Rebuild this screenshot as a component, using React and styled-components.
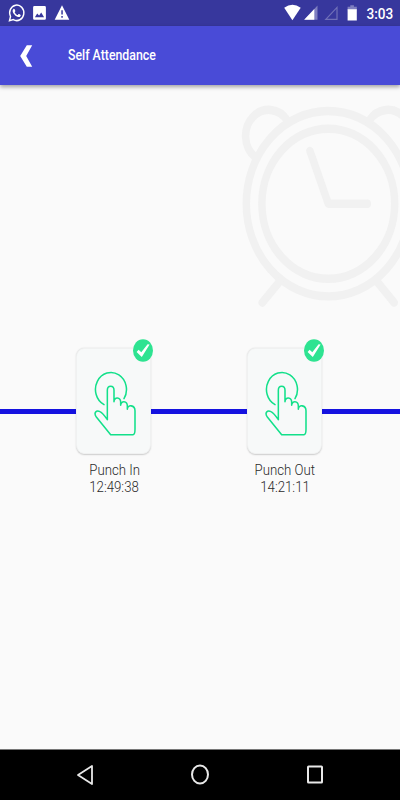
import styled, { createGlobalStyle } from "styled-components";

const GlobalStyle = createGlobalStyle`
  * {
    box-sizing: border-box;
  }
  body {
    margin: 0;
    font-family: Roboto, "Liberation Sans", sans-serif;
  }
`;

const Screen = styled.div`
  display: flex;
  flex-direction: column;
  width: 400px;
  height: 800px;
  overflow: hidden;
  background-color: #fafafa;
`;

const StatusBar = styled.div`
  display: flex;
  justify-content: space-between;
  height: 26px;
  flex-shrink: 0;
  background-color: #37379d;
  svg {
    display: block;
  }
`;

const StatusRight = styled.div`
  display: flex;
`;

const Clock = styled.span`
  width: 34px;
  padding-left: 0.5px;
  font-size: 14px;
  font-weight: 500;
  line-height: 28px;
  color: white;
  transform: scaleX(0.97);
  transform-origin: left;
`;

const Header = styled.header`
  display: flex;
  align-items: center;
  height: 59px;
  flex-shrink: 0;
  padding-left: 19px;
  background-color: #494bd7;
  box-shadow: 0 2px 4px rgba(0, 0, 0, 0.35);
  z-index: 1;
`;

const Title = styled.h1`
  margin: 0 0 1px 34px;
  font-size: 14px;
  font-weight: 500;
  line-height: 20px;
  color: white;
  white-space: nowrap;
  transform: scaleX(0.88);
  transform-origin: left;
`;

const Content = styled.main`
  display: flex;
  flex-direction: column;
  flex: 1;
`;

const AlarmBox = styled.div`
  align-self: flex-end;
  width: 170px;
  height: 230px;
  margin-top: 5px;
  svg {
    display: block;
  }
`;

const PunchRow = styled.div`
  display: flex;
  gap: 51px;
  height: 180px;
  margin-top: 28px;
  padding-left: 53.8px;
  background: linear-gradient(#1512e0, #1512e0) 0 60.5px / 100% 5px no-repeat;
`;

const PunchItem = styled.div`
  display: flex;
  flex-direction: column;
  align-items: center;
  width: 120px;
`;

const Card = styled.div`
  position: relative;
  width: 75px;
  height: 106px;
  padding: 22px 0 0 17px;
  border-radius: 8px / 9px;
  border: 1px solid #f0f1f1;
  background-color: #f7f9f9;
  box-shadow: 0 0.5px 1.5px rgba(0, 0, 0, 0.18);
  svg {
    display: block;
  }
`;

const Badge = styled.div`
  position: absolute;
  top: -10px;
  right: -3px;
`;

const Label = styled.p`
  margin: 0;
  padding-left: 0.8px;
  font-size: 14px;
  font-weight: 350;
  line-height: 17px;
  color: #2a2a2a;
  white-space: nowrap;
  transform: scaleX(0.945);
  &:first-of-type {
    margin-top: 8px;
  }
`;

const NavBar = styled.nav`
  display: flex;
  justify-content: space-between;
  align-items: center;
  height: 51px;
  flex-shrink: 0;
  padding: 0 76px;
  border-top: 1px solid #777;
  background-color: black;
`;

function NoticeIcons() {
  return (
    <svg width="80" height="26" viewBox="0 0 80 26" fill="white">
      <g transform="translate(8.6 4.2) scale(0.67 0.73)">
        <path d="M17.472 14.382c-.297-.149-1.758-.867-2.03-.967-.273-.099-.471-.148-.67.15-.197.297-.767.966-.94 1.164-.173.199-.347.223-.644.075-.297-.15-1.255-.463-2.39-1.475-.883-.788-1.48-1.761-1.653-2.059-.173-.297-.018-.458.13-.606.134-.133.298-.347.446-.52.149-.174.198-.298.298-.497.099-.198.05-.371-.025-.52-.075-.149-.669-1.612-.916-2.207-.242-.579-.487-.5-.669-.51-.173-.008-.371-.01-.57-.01-.198 0-.52.074-.792.372-.272.297-1.04 1.016-1.04 2.479 0 1.462 1.065 2.875 1.213 3.074.149.198 2.096 3.2 5.077 4.487.709.306 1.262.489 1.694.625.712.227 1.36.195 1.871.118.571-.085 1.758-.719 2.006-1.413.248-.694.248-1.289.173-1.413-.074-.124-.272-.198-.57-.347" />
        <path
          d="M1.3 22.7l1.6-5.8A10.6 10.6 0 1 1 7.1 21.1z"
          fill="none"
          stroke="white"
          strokeWidth="2.1"
        />
      </g>
      <path
        fillRule="evenodd"
        d="M34.4 6h10.2a1.3 1.4 0 0 1 1.3 1.4v11a1.3 1.4 0 0 1-1.3 1.4H34.4a1.3 1.4 0 0 1-1.3-1.4v-11A1.3 1.4 0 0 1 34.4 6zM37.2 13.6l-2.3 3.6h9.2l-2.9-4.6-2.1 3z"
      />
      <path
        fillRule="evenodd"
        d="M62 5.2l7.3 14.5H54.7zM61.3 10.3v4.3h1.5v-4.3zM61.3 16v1.7h1.5V16z"
      />
    </svg>
  );
}

function SignalIcons() {
  return (
    <svg width="82" height="26" viewBox="0 0 82 26" fill="white">
      <path d="M.2 7.7Q8.4 2 16.7 7.7L8.4 20.2z" />
      <path d="M33.5 5.5v14.2H20.2z" fill="#7f7fc0" />
      <path d="M30.3 9v10.7H20.2z" />
      <path d="M53 7.4v11.9H41.8z" fill="none" stroke="#7070b8" strokeWidth="1.2" />
      <path d="M66.3 5.2h3.6v1.6h2.9v3.4h-9.2v-3.4h2.7z" fill="#7f7fc0" />
      <path d="M63.6 9.2h9.2v11.2h-9.2z" />
    </svg>
  );
}

function AlarmClock() {
  return (
    <svg
      width="170"
      height="230"
      viewBox="0 0 170 203.5"
      preserveAspectRatio="none"
      fill="none"
      stroke="#f1f1f1"
      strokeWidth="7.5"
      strokeLinecap="round"
      strokeLinejoin="round"
    >
      <circle cx="98.3" cy="100.6" r="82" />
      <circle cx="98.3" cy="100.6" r="66.4" />
      <path d="M80 54l18.3 46.6h39" />
      <path d="M57.5 27.2A23.1 23.1 0 1 0 24.7 59" />
      <path d="M139.1 27.2A23.1 23.1 0 1 1 171.9 59" />
      <path d="M49.5 169.5L32.3 188.2M147.1 169.5l17 18.7" />
    </svg>
  );
}

function HandIcon() {
  return (
    <svg
      width="42"
      height="65"
      viewBox="88 122 126 195"
      fill="none"
      stroke="#12e08a"
      strokeWidth="4.6"
      strokeLinecap="round"
      strokeLinejoin="round"
    >
      <path d="M118 223A46.5 51 0 1 1 178 205" />
      <path d="M128 268V180C128 164 148 164 148 180V214C148 199 168 199 168 216V225C168 210 188 211 188 227V237C188 221 211 224 211 241V297Q211 313 205 313H138L95 260C86 248 95 238 106 244Q114 248 128 268" />
    </svg>
  );
}

function CheckIcon() {
  return (
    <svg width="20" height="23" viewBox="0 0 20 23">
      <ellipse cx="10" cy="11.5" rx="10" ry="11.3" fill="#2ee391" />
      <path d="M3.6 13l2-2.3 2.7 2.5L14.6 5.3l2 .2L8.8 18z" fill="white" />
    </svg>
  );
}

function Punch({ name, time }) {
  return (
    <PunchItem>
      <Card>
        <HandIcon />
        <Badge>
          <CheckIcon />
        </Badge>
      </Card>
      <Label>{name}</Label>
      <Label>{time}</Label>
    </PunchItem>
  );
}

function App() {
  return (
    <>
      <GlobalStyle />
      <Screen>
        <StatusBar>
          <NoticeIcons />
          <StatusRight>
            <SignalIcons />
            <Clock>3:03</Clock>
          </StatusRight>
        </StatusBar>
        <Header>
          <svg width="15" height="24" viewBox="0 0 15 24">
            <path d="M7.8 1.3h5.4L7.2 12l6 10.7H7.8L1.2 12z" fill="white" />
          </svg>
          <Title>Self Attendance</Title>
        </Header>
        <Content>
          <AlarmBox>
            <AlarmClock />
          </AlarmBox>
          <PunchRow>
            <Punch name="Punch In" time="12:49:38" />
            <Punch name="Punch Out" time="14:21:11" />
          </PunchRow>
        </Content>
        <NavBar>
          <svg width="18" height="22" fill="none" stroke="#e8e8e8" strokeWidth="1.8">
            <path d="M16 2v18L2 11z" strokeLinejoin="round" />
          </svg>
          <svg width="20" height="22" fill="none" stroke="#e8e8e8" strokeWidth="2">
            <ellipse cx="10" cy="10.5" rx="8" ry="9" />
          </svg>
          <svg width="18" height="22" fill="none" stroke="#e8e8e8" strokeWidth="2">
            <rect x="2" y="2.5" width="14" height="16" rx="0.6" />
          </svg>
        </NavBar>
      </Screen>
    </>
  );
}

export default App;
